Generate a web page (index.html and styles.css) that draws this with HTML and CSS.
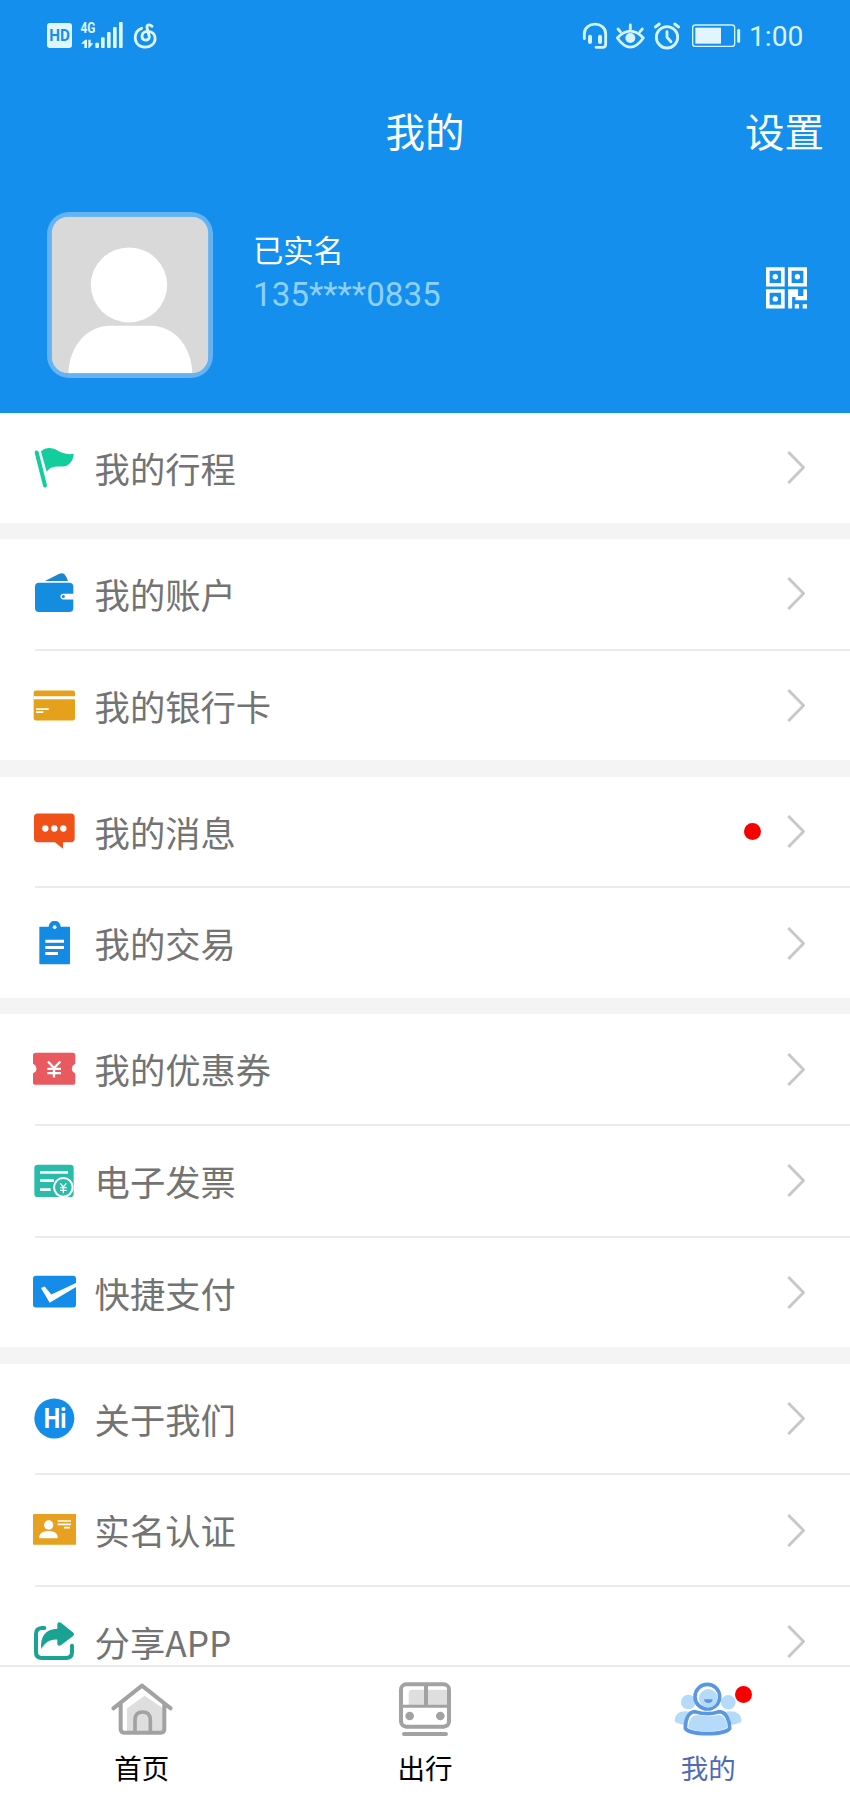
FILE: index.html
```html
<!DOCTYPE html>
<html lang="zh-CN">
<head>
<meta charset="utf-8">
<title>我的</title>
<link rel="stylesheet" href="styles.css">
</head>
<body>
<svg class="defs" width="0" height="0">
  <symbol id="chevron" viewBox="0 0 18 33"><path d="M1.300 1 16.500 16.500 1.300 32" fill="none" stroke="#c8c8c8" stroke-width="2.900"/></symbol>
</svg>
<div class="app">
  <header class="header">
    <div class="status">
      <svg class="status-left" viewBox="45 0 345 150">
        <rect x="51" y="39" width="75" height="75" rx="9" fill="#dff6ff"/>
        <text x="88.500" y="94" class="hd" textLength="62" lengthAdjust="spacingAndGlyphs">HD</text>
        <text x="174" y="70" class="net" textLength="45" lengthAdjust="spacingAndGlyphs">4G</text>
        <g fill="#dff6ff">
          <path d="M153 101 165 89H171V114H163V101ZM175 89H182V100H190L178 114H175Z"/>
          <rect x="196" y="98" width="11" height="16" rx="3"/>
          <rect x="213" y="82" width="11" height="32" rx="3"/>
          <rect x="231" y="66" width="11" height="48" rx="3"/>
          <rect x="249" y="51" width="11" height="63" rx="3"/>
          <rect x="267" y="36" width="11" height="78" rx="3"/>
        </g>
        <path d="M335 55C309 65 309 102 336 110C359 116 378 101 375 81C371 60 339 58 336 77C335 94 358 95 358 80L351 53C350 42 360 43 366 49" fill="none" stroke="#dff6ff" stroke-width="8.500" stroke-linecap="round"/>
      </svg>
      <div class="status-right">
        <svg class="status-icons" viewBox="36 0 480 150">
          <g fill="none" stroke="#d5f4ff" stroke-width="8.500" stroke-linecap="round" stroke-linejoin="round">
            <path d="M43 86V71C43 33 107 33 107 71V103Q107 112 98 112H78"/>
            <path d="M60 80V96M90 80V96" stroke-width="12"/>
            <path d="M142 84Q181 43 220 84Q181 139 142 84ZM181 57V45M151 65 144 57M210 65 217 57"/>
            <circle cx="291" cy="82" r="32"/>
            <path d="M291 65V82L303 95M256 51 268 42M326 51 314 42"/>
            <rect x="368" y="45" width="126" height="64" rx="8" stroke-width="4"/>
            <path d="M506 61V94" stroke-width="9"/>
          </g>
          <circle cx="181" cy="84" r="15" fill="#d5f4ff"/>
          <rect x="376" y="53" width="77" height="48" fill="#e2f5ff"/>
        </svg>
        <span class="time">1:00</span>
      </div>
    </div>
    <div class="titlebar">
      <span></span>
      <h1 class="title">我的</h1>
      <a class="settings">设置</a>
    </div>
    <div class="profile">
      <svg class="avatar" viewBox="52 67 496 496">
        <rect x="52" y="67" width="496" height="496" rx="66" fill="#65b3f2"/>
        <clipPath id="face"><rect x="66" y="81" width="468" height="468" rx="50"/></clipPath>
        <g clip-path="url(#face)">
          <rect x="66" y="81" width="468" height="468" fill="#d9d9d9"/>
          <ellipse cx="297" cy="285" rx="114" ry="112" fill="#fff"/>
          <path d="M116 549C118 466 174 407 240 407H362C430 407 484 466 486 549Z" fill="#fff"/>
        </g>
      </svg>
      <div class="who">
        <div class="name">已实名</div>
        <div class="phone">135****0835</div>
      </div>
      <svg class="qr" viewBox="77 51 124 126">
        <g fill="none" stroke="#fff" stroke-width="11">
          <path d="M82.500 56.500H128V104H82.500ZM149 56.500H195.500V104H149ZM82.500 123H128V170.500H82.500Z"/>
        </g>
        <g fill="#fff">
          <circle cx="105" cy="80" r="8"/><circle cx="172" cy="80" r="8"/><circle cx="105" cy="147" r="8"/>
          <path d="M144 118H174V138H190V118H201V151H166V141H156V176H144ZM164 163H177V176H164ZM188 163H201V176H188Z"/>
        </g>
      </svg>
    </div>
  </header>

  <main class="list">
    <section class="group">
      <div class="row">
        <svg class="icon" viewBox="96 77.400 132 132"><path d="M110 97 135 196" stroke="#13cd9d" stroke-width="12" stroke-linecap="round"/><path d="M123 94C138 80 155 82 168 89C188 101 204 104 221 101C221 121 207 139 188 139C168 138 150 138 140 155Z" fill="#13cd9d"/></svg>
        <span class="label">我的行程</span><svg class="chev"><use href="#chevron"/></svg>
      </div>
    </section>
    <section class="group">
      <div class="row">
        <svg class="icon" viewBox="96 455.700 132 132"><path d="M135 483 178 461Q187 457 194 463Q200 469 204 483Z" fill="#1c86d0"/><rect x="105" y="488" width="115" height="88" rx="12" fill="#148de0"/><path d="M221 521H190A8.500 8.500 0 0 0 190 538H221Z" fill="#fff"/><circle cx="190" cy="529.500" r="4.500" fill="#148de0"/></svg>
        <span class="label">我的账户</span><svg class="chev"><use href="#chevron"/></svg>
      </div>
      <div class="row">
        <svg class="icon" viewBox="96 790.500 132 132"><rect x="101" y="810" width="124" height="90" rx="7" fill="#e5a01c"/><path d="M101 832H225" stroke="#fff" stroke-width="9"/><path d="M108 866H146M108 875H130" stroke="#fff" stroke-width="5"/></svg>
        <span class="label">我的银行卡</span><svg class="chev"><use href="#chevron"/></svg>
      </div>
    </section>
    <section class="group">
      <div class="row">
        <svg class="icon" viewBox="96 88.500 132 132"><path d="M113 99H213Q224 99 224 110V174Q224 185 213 185H189V205L165 185H113Q102 185 102 174V110Q102 99 113 99Z" fill="#ef5118"/><g fill="#fff"><circle cx="136" cy="144" r="9.500"/><circle cx="163" cy="144" r="9.500"/><circle cx="190" cy="144" r="9.500"/></g></svg>
        <span class="label">我的消息</span><i class="dot"></i><svg class="chev"><use href="#chevron"/></svg>
      </div>
      <div class="row">
        <svg class="icon" viewBox="96 423.600 132 132"><path d="M120 441H146A18 18 0 0 1 182 441H208Q210 441 210 443V551Q210 553 208 553H120Q118 553 118 551V443Q118 441 120 441Z" fill="#148be2"/><circle cx="164" cy="442" r="5.500" fill="#fff"/><path d="M136 484H192M136 503H192M136 521H174" stroke="#fff" stroke-width="9"/></svg>
        <span class="label">我的交易</span><svg class="chev"><use href="#chevron"/></svg>
      </div>
    </section>
    <section class="group">
      <div class="row">
        <svg class="icon" viewBox="96 801.600 132 132"><path d="M107 819H218Q226 819 226 827V852L218 858Q213 867 218 875L226 881V907Q226 915 218 915H107Q99 915 99 907V881L107 875Q112 867 107 858L99 852V827Q99 819 107 819Z" fill="#e85a60"/><path d="M144 845 162 865 181 845M162 864V893M142 867H183M142 880H183" fill="none" stroke="#fff" stroke-width="7"/></svg>
        <span class="label">我的优惠券</span><svg class="chev"><use href="#chevron"/></svg>
      </div>
      <div class="row">
        <svg class="icon" viewBox="96 117 132 132"><rect x="103" y="134" width="118" height="97" rx="10" fill="#2abcab"/><path d="M120 157H204M120 182H162M120 209H152" stroke="#fff" stroke-width="8"/><circle cx="190" cy="202" r="28" fill="#2abcab" stroke="#fff" stroke-width="6"/><path d="M181 190 190 201 199 190M190 200V220M180 203H200M180 211H200" fill="none" stroke="#fff" stroke-width="4"/></svg>
        <span class="label">电子发票</span><svg class="chev"><use href="#chevron"/></svg>
      </div>
      <div class="row">
        <svg class="icon" viewBox="96 451.800 132 132"><rect x="99" y="466" width="129" height="95" rx="9" fill="#148dea"/><path d="M123 503 134 498 154 522 229 487V499L149 547Z" fill="#fff"/></svg>
        <span class="label">快捷支付</span><svg class="chev"><use href="#chevron"/></svg>
      </div>
    </section>
    <section class="group">
      <div class="row">
        <svg class="icon" viewBox="96 829.800 132 132"><circle cx="163" cy="894" r="60" fill="#148dea"/><text class="hi" x="165.500" y="923" textLength="68" lengthAdjust="spacingAndGlyphs">Hi</text></svg>
        <span class="label">关于我们</span><svg class="chev"><use href="#chevron"/></svg>
      </div>
      <div class="row">
        <svg class="icon" viewBox="96 144.900 132 132"><rect x="99" y="163" width="131" height="92" rx="3" fill="#e8a020"/><circle cx="146" cy="196" r="14" fill="#fff"/><path d="M118 236V232C118 220 131 214 146 214S173 220 173 232V236Z" fill="#fff"/><path d="M173 184H213M173 194H213M192 204H210" stroke="#fff" stroke-width="5"/></svg>
        <span class="label">实名认证</span><svg class="chev"><use href="#chevron"/></svg>
      </div>
      <div class="row">
        <svg class="icon" viewBox="96 480 132 132"><path d="M133 504H126Q108 505 108 521V577Q108 594 126 594H198Q216 594 216 577V557" fill="none" stroke="#18a392" stroke-width="12" stroke-linecap="round"/><path d="M124 568C119 530 137 507 172 506V491Q175 484 183 488L221 519Q224 523 220 527L183 556Q174 560 172 553V539C150 537 134 548 124 568Z" fill="#18a392"/></svg>
        <span class="label">分享APP</span><svg class="chev"><use href="#chevron"/></svg>
      </div>
    </section>
  </main>

  <nav class="tabs">
    <a class="tab">
      <svg class="tab-icon" viewBox="317 664 216 168"><path d="M380 818V746L433 708 488 746V818Z" fill="#dedede"/><g fill="none" stroke="#a2a2a2" stroke-width="12" stroke-linecap="round" stroke-linejoin="round"><path d="M339 746 425 678 511 746M361 732V808Q361 819 372 819H481Q492 819 492 808V732"/><path d="M404 818V781Q404 757 427 757T450 781V818" stroke-width="11"/></g></svg>
      <span>首页</span>
    </a>
    <a class="tab">
      <svg class="tab-icon" viewBox="87 124 216 168"><path d="M146 199V160Q146 150 157 150H262V199Z" fill="#dedede"/><g fill="none" stroke="#a2a2a2"><rect x="123" y="134" width="144" height="127" rx="16" stroke-width="12"/><path d="M198 134V200" stroke-width="12"/><path d="M123 200H267" stroke-width="9"/><path d="M132 283H258" stroke-width="12" stroke-linecap="round"/></g><circle cx="149" cy="229" r="13" fill="#a2a2a2"/><circle cx="241" cy="229" r="13" fill="#a2a2a2"/></svg>
      <span>出行</span>
    </a>
    <a class="tab active">
      <span class="badge-wrap">
        <svg class="tab-icon" viewBox="935 124 216 168"><g fill="#b5dafa"><circle cx="984" cy="187" r="22"/><circle cx="1104" cy="188" r="22"/><path d="M990 216Q944 208 943 244Q948 253 980 257ZM1092 216Q1142 208 1144 244Q1139 253 1104 257Z"/></g><circle cx="1041" cy="171" r="37" fill="#fff" stroke="#5997e2" stroke-width="11"/><circle cx="1044" cy="176" r="28" fill="#b5dafa"/><path d="M1031 179H1057Q1056 190 1044 190T1031 179Z" fill="#5997e2"/><path d="M1004 216Q1042 228 1076 216C1097 216 1108 243 1108 266C1093 287 990 287 975 266C975 240 984 216 1004 216Z" fill="#fff" stroke="#5997e2" stroke-width="11" stroke-linejoin="round"/><path d="M984 264C984 236 998 225 1014 226Q1044 234 1074 226C1092 226 1101 247 1101 263C1082 279 1006 279 984 264Z" fill="#b5dafa"/></svg>
        <i class="dot badge"></i>
      </span>
      <span>我的</span>
    </a>
  </nav>
</div>
</body>
</html>
```
FILE: styles.css
```css
* { box-sizing: border-box; }
body {
  margin: 0;
  background: #fff;
  font-family: "Noto Sans CJK SC", sans-serif;
  -webkit-font-smoothing: antialiased;
}
svg { display: block; flex: none; }
.defs { position: absolute; }
.app {
  width: 850px;
  height: 1794px;
  display: flex;
  flex-direction: column;
  overflow: hidden;
}
.header {
  flex: none;
  height: 413px;
  background: #148fed;
  color: #fff;
}
.status {
  display: flex;
  justify-content: space-between;
  padding: 10px 48px 0 45px;
  height: 60px;
}
.status-left { width: 115px; height: 50px; }
.status-right { display: flex; }
.status-icons { width: 160px; height: 50px; }
.time {
  margin-left: 7px;
  width: 53px;
  font: 28.2px/50px Roboto, sans-serif;
  padding-top: 2px;
  white-space: nowrap;
  color: #d9f3ff;
}
.hd {
  font: 700 50px Roboto, sans-serif;
  fill: #148fed;
  text-anchor: middle;
}
.net {
  font: 700 46px Roboto, sans-serif;
  fill: #dff6ff;
  text-anchor: middle;
}
.hi {
  font: 700 83px Roboto, sans-serif;
  fill: #fff;
  text-anchor: middle;
}
.titlebar {
  display: grid;
  grid-template-columns: 1fr auto 1fr;
  align-items: center;
  height: 142px;
  padding: 0 26px 3px;
  font-size: 39.5px;
  line-height: 60px;
}
.title { margin: 0; font-size: inherit; font-weight: 400; }
.settings { text-align: right; }
.profile {
  display: flex;
  align-items: flex-start;
  padding: 10px 43px 0 47px;
}
.avatar { width: 166px; height: 166px; }
.who { flex: 1; margin-left: 40px; padding-top: 16px; }
.name { font-size: 30.3px; line-height: 42px; }
.phone {
  padding-top: 4px;
  font: 33.2px/42px Roboto, sans-serif;
  color: #8fd0fa;
}
.qr { width: 41px; height: 42px; margin-top: 55px; }
.list {
  flex: 1;
  min-height: 0;
  overflow: hidden;
  display: flex;
  flex-direction: column;
  gap: 16.3px;
  background: #f4f4f4;
}
.group { flex: none; background: #fff; }
.row {
  display: flex;
  align-items: center;
  height: 109.7px;
  padding: 0 45px 0 32px;
}
.row + .row {
  height: 111.7px;
  border-top: 2px solid transparent;
  background: linear-gradient(#ebebeb, #ebebeb) 35px 0 / 100% 2px no-repeat border-box;
}
.icon { width: 44px; height: 44px; }
.label {
  flex: 1;
  margin-left: 18.6px;
  font-size: 35.3px;
  line-height: 40px;
  color: #737373;
}
.chev { width: 18px; height: 33px; }
.dot {
  flex: none;
  width: 17px;
  height: 17px;
  border-radius: 50%;
  background: #f80000;
}
.row .dot { margin-right: 26px; }
.tabs {
  flex: none;
  display: grid;
  grid-template-columns: repeat(3, 1fr);
  height: 129px;
  border-top: 2px solid #eaeaea;
  background: #fff;
}
.tab {
  display: flex;
  flex-direction: column;
  align-items: center;
  padding-top: 14px;
  font-size: 27.5px;
  line-height: 40px;
  color: #000;
}
.tab-icon { width: 72px; height: 56px; margin-bottom: 10px; }
.badge-wrap { position: relative; }
.badge { position: absolute; left: 63px; top: 5px; }
.active { color: #4f6bb6; }
```
